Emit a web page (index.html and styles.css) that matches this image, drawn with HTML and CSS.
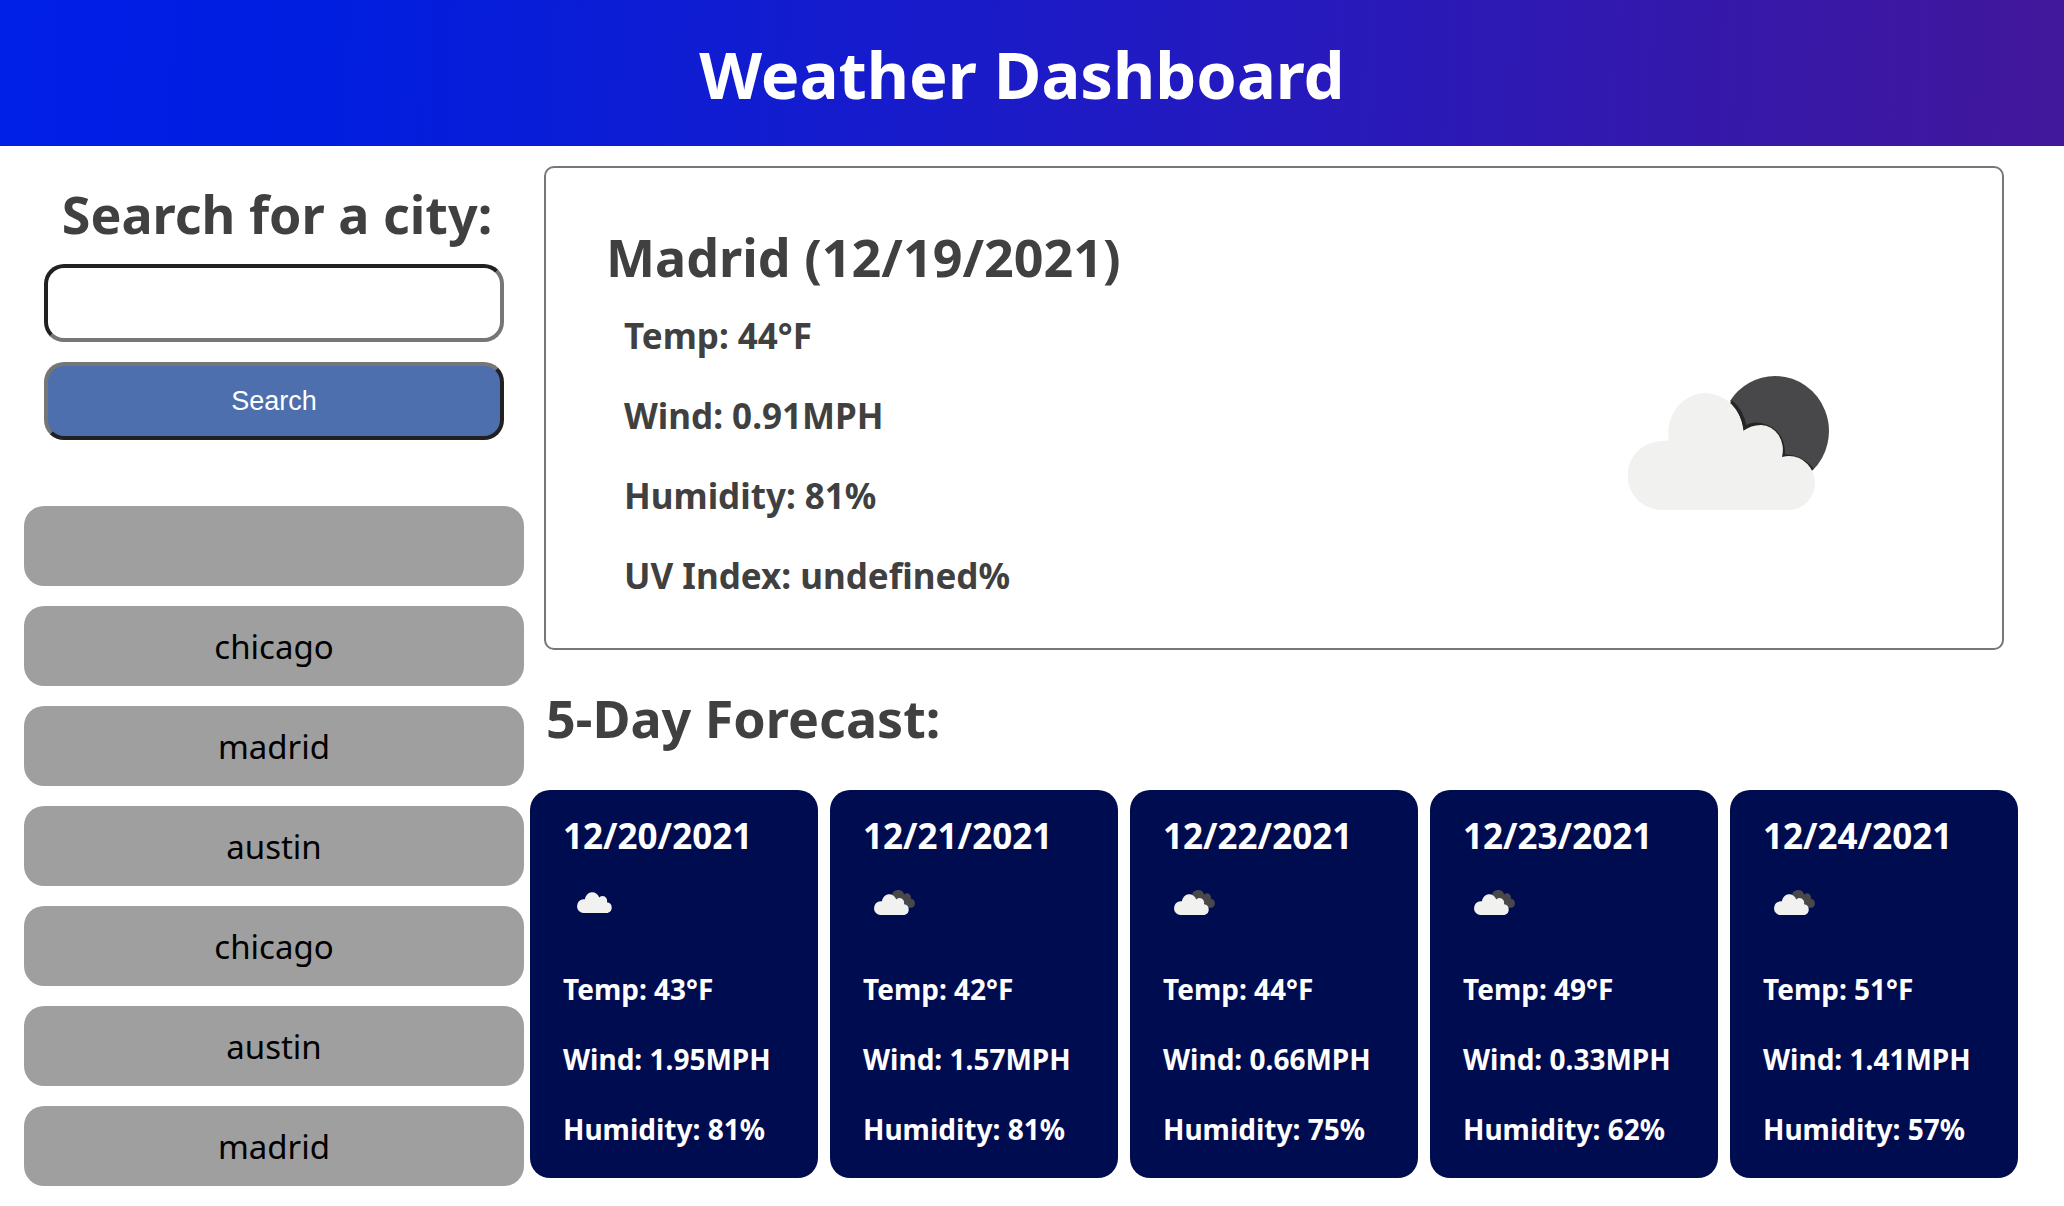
FILE: index.html
```html
<!DOCTYPE html>
<html lang="en">
<head>
<meta charset="utf-8">
<meta name="viewport" content="width=device-width, initial-scale=1">
<title>Weather Dashboard</title>
<link rel="stylesheet" href="styles.css">
</head>
<body>
<svg class="sprite" aria-hidden="true">
  <symbol id="cloud" viewBox="0 0 186 118">
    <path d="M34 118A34 35 0 0 1 34 48Q38 47 41 48A38 39 0 0 1 115 38Q123 31 133 31A23 25 0 0 1 155 63A28 28 0 0 1 158 118Z"/>
  </symbol>
</svg>
<header class="header">
  <h1 class="title">Weather Dashboard</h1>
</header>
<main class="layout">
  <aside class="sidebar">
    <form class="search">
      <label class="heading" for="city">Search for a city:</label>
      <input class="search-input" id="city" type="text">
      <button class="search-button" type="button">Search</button>
    </form>
    <div class="history">
      <button class="city" type="button" aria-label="Empty search"></button>
      <button class="city" type="button">chicago</button>
      <button class="city" type="button">madrid</button>
      <button class="city" type="button">austin</button>
      <button class="city" type="button">chicago</button>
      <button class="city" type="button">austin</button>
      <button class="city" type="button">madrid</button>
    </div>
  </aside>
  <div class="content">
    <section class="current">
      <div>
        <h2 class="heading">Madrid (12/19/2021)</h2>
        <ul class="current-stats">
          <li>Temp: 44°F</li>
          <li>Wind: 0.91MPH</li>
          <li>Humidity: 81%</li>
          <li>UV Index: undefined%</li>
        </ul>
      </div>
      <svg class="current-icon" viewBox="0 0 202 134" role="img" aria-label="Few clouds">
        <path fill="#48484a" d="M102 25A54 54 0 0 1 147 0A54 55 0 0 1 184 95Q174 81 154 80Q157 54 133 48Q124 47 116 53Q114 35 102 25Z"/>
        <path fill="none" stroke="#252527" stroke-width="4" d="M103 26Q114 35 117 52Q124 47 133 49Q156 55 155 80Q174 81 184 94"/>
        <path fill="#f1f1f0" d="M34 134A34 34 0 0 1 34 65Q38 64 41 65A38 40 0 0 1 78 17A38 40 0 0 1 115 55Q123 49 133 49A22 25 0 0 1 154 81Q158 80 161 80A26 27 0 0 1 161 134Z"/>
      </svg>
    </section>
    <h2 class="heading forecast-heading">5-Day Forecast:</h2>
    <section class="forecast">
      <article class="day">
        <h3 class="date">12/20/2021</h3>
        <svg class="day-icon" viewBox="0 0 60 60" role="img" aria-label="Cloudy"><use class="light" href="#cloud" x="14" y="18" width="36" height="23"/></svg>
        <ul class="day-stats"><li>Temp: 43°F</li><li>Wind: 1.95MPH</li><li>Humidity: 81%</li></ul>
      </article>
      <article class="day">
        <h3 class="date">12/21/2021</h3>
        <svg class="day-icon" viewBox="0 0 60 60" role="img" aria-label="Broken clouds"><use class="dark" href="#cloud" x="22" y="16" width="31" height="20"/><use class="light" href="#cloud" x="11" y="20" width="36" height="23"/></svg>
        <ul class="day-stats"><li>Temp: 42°F</li><li>Wind: 1.57MPH</li><li>Humidity: 81%</li></ul>
      </article>
      <article class="day">
        <h3 class="date">12/22/2021</h3>
        <svg class="day-icon" viewBox="0 0 60 60" role="img" aria-label="Broken clouds"><use class="dark" href="#cloud" x="22" y="16" width="31" height="20"/><use class="light" href="#cloud" x="11" y="20" width="36" height="23"/></svg>
        <ul class="day-stats"><li>Temp: 44°F</li><li>Wind: 0.66MPH</li><li>Humidity: 75%</li></ul>
      </article>
      <article class="day">
        <h3 class="date">12/23/2021</h3>
        <svg class="day-icon" viewBox="0 0 60 60" role="img" aria-label="Broken clouds"><use class="dark" href="#cloud" x="22" y="16" width="31" height="20"/><use class="light" href="#cloud" x="11" y="20" width="36" height="23"/></svg>
        <ul class="day-stats"><li>Temp: 49°F</li><li>Wind: 0.33MPH</li><li>Humidity: 62%</li></ul>
      </article>
      <article class="day">
        <h3 class="date">12/24/2021</h3>
        <svg class="day-icon" viewBox="0 0 60 60" role="img" aria-label="Broken clouds"><use class="dark" href="#cloud" x="22" y="16" width="31" height="20"/><use class="light" href="#cloud" x="11" y="20" width="36" height="23"/></svg>
        <ul class="day-stats"><li>Temp: 51°F</li><li>Wind: 1.41MPH</li><li>Humidity: 57%</li></ul>
      </article>
    </section>
  </div>
</main>
</body>
</html>
```
FILE: styles.css
```css
* {
  box-sizing: border-box;
}

body {
  margin: 0;
  background: #fff;
  color: #404040;
  font-family: "Lucida Grande", "Noto Sans", sans-serif;
}

h1, h2, h3, ul {
  margin: 0;
  padding: 0;
}

ul {
  list-style: none;
}

.sprite {
  display: none;
}

.header {
  padding: 30px 40px 28px 20px;
  background: linear-gradient(92deg, #001fe8 0%, #001ee0 15%, #241abf 60%, #42179b 100%);
}

.title {
  color: #fff;
  font-size: 65px;
  line-height: 88px;
  text-align: center;
}

.layout {
  display: grid;
  grid-template-columns: 500px 1fr;
  gap: 6px;
  padding: 20px 46px 20px 24px;
}

.heading {
  font-size: 52px;
  font-weight: 700;
  line-height: 60px;
}

.search {
  display: flex;
  flex-direction: column;
  gap: 20px;
  padding: 18px 20px 0;
}

.search .heading {
  padding-left: 6px;
  text-align: center;
}

.search-input,
.search-button {
  width: 100%;
  height: 78px;
  border: 4px solid;
  border-radius: 20px;
  font-family: Arial, "Liberation Sans", sans-serif;
  font-size: 27px;
}

.search-input {
  padding: 0 20px;
  background: #fff;
  border-color: #212121 #767676 #767676 #212121;
}

.search-button {
  background: #4d6fae;
  color: #fff;
  border-color: #767676 #212121 #212121 #767676;
}

.history {
  display: flex;
  flex-direction: column;
  gap: 20px;
  margin-top: 66px;
}

.city {
  height: 80px;
  border: 0;
  border-radius: 20px;
  background: #9f9f9f;
  color: #000;
  font-family: inherit;
  font-size: 33px;
}

.current {
  display: flex;
  justify-content: space-between;
  align-items: center;
  margin: 0 14px;
  padding: 59px 172px 32px 60px;
  border: 2px solid #777;
  border-radius: 10px;
}

.current-stats {
  margin-top: 9px;
  padding-left: 18px;
  font-size: 35px;
  font-weight: 700;
  line-height: 80px;
}

.current-icon {
  width: 202px;
  height: 134px;
  margin-top: 42px;
}

.forecast-heading {
  margin: 38px 16px 42px;
}

.forecast {
  display: grid;
  grid-template-columns: repeat(5, 1fr);
  gap: 12px;
}

.day {
  padding: 24px 33px 14px;
  border-radius: 20px;
  background: #000c50;
  color: #fff;
}

.date {
  font-size: 35px;
  line-height: 44px;
}

.day-icon {
  display: block;
  width: 60px;
  height: 60px;
  margin: 14px 0 22px;
}

.day-stats {
  font-size: 28px;
  font-weight: 700;
  line-height: 70px;
}

.light {
  fill: #f1f1f0;
}

.dark {
  fill: #48484a;
}
```
